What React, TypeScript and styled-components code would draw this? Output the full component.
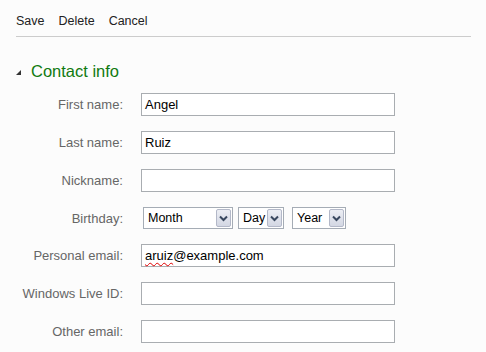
import React from "react";
import styled, { createGlobalStyle } from "styled-components";

const GlobalStyle = createGlobalStyle`
	html, body {
		margin: 0;
		padding: 0;
		background: #fcfcfc;
	}
	body {
		font-family: "Liberation Sans", Arial, sans-serif;
		font-size: 13px;
		color: #222;
	}
`;

const Page = styled.div`
	width: 486px;
	height: 352px;
	overflow: hidden;
	background: #fcfcfc;
`;

const Toolbar = styled.div`
	display: flex;
	gap: 14px;
	margin: 0 15px 0 16px;
	padding: 14px 0 7px;
	border-bottom: 1px solid #cccccc;
	font-size: 12.5px;
	line-height: 15px;
	color: #222;
`;

const ToolLink = styled.span`
	cursor: pointer;
`;

const SectionHead = styled.div`
	display: flex;
	align-items: center;
	gap: 10px;
	margin: 24px 0 0 16px;
`;

const Expander = styled.span`
	width: 0;
	height: 0;
	margin-top: 3px;
	border-style: solid;
	border-width: 0 0 5px 5px;
	border-color: transparent transparent #333 transparent;
`;

const Title = styled.h2`
	margin: 0;
	font-size: 16.5px;
	font-weight: normal;
	line-height: 20px;
	color: #117a11;
`;

const Form = styled.div`
	display: flex;
	flex-direction: column;
	gap: 15px;
	margin-top: 12px;
	padding-left: 16px;
`;

const Row = styled.div`
	display: flex;
	align-items: center;
	gap: 18px;
`;

const Label = styled.label`
	width: 107px;
	text-align: right;
	color: #666;
	font-size: 13px;
	white-space: nowrap;
	flex-shrink: 0;
`;

const TextBox = styled.div`
	box-sizing: border-box;
	width: 254px;
	height: 23px;
	padding: 0 3px;
	border: 1px solid #a9adb1;
	background: #fff;
	color: #000;
	font-size: 13px;
	line-height: 21px;
`;

const Misspelled = styled.span`
	text-decoration: underline wavy #e00000;
	text-decoration-thickness: 1px;
	text-underline-offset: 2px;
`;

const Selects = styled.div`
	display: flex;
	margin-left: 2px;
`;

const Drop = styled.div<{ $w: number; $gap: number }>`
	box-sizing: border-box;
	display: flex;
	align-items: center;
	justify-content: space-between;
	width: ${(p) => p.$w}px;
	height: 22px;
	margin-right: ${(p) => p.$gap}px;
	padding: 1px 1px 1px 4px;
	border: 1px solid #a5acb5;
	background: #fff;
	color: #000;
	font-size: 12.5px;
`;

const DropText = styled.span`
	white-space: nowrap;
`;

const DropButton = styled.span`
	box-sizing: border-box;
	display: flex;
	flex-shrink: 0;
	align-items: center;
	justify-content: center;
	width: 15px;
	height: 18px;
	margin-left: 2px;
	border: 1px solid #b3b8c8;
	border-radius: 2px;
	background: linear-gradient(#eceef4, #d3d7e3);
`;

const Chevron = () => (
	<svg width="9" height="7" viewBox="0 0 9 7">
		<path d="M1 1.5 L4.5 5 L8 1.5" fill="none" stroke="#39485f" strokeWidth="2" />
	</svg>
);

type Field = { label: string; value?: string; spell?: boolean };

const fieldsTop: Field[] = [
	{ label: "First name:", value: "Angel" },
	{ label: "Last name:", value: "Ruiz" },
	{ label: "Nickname:" },
];

const fieldsBottom: Field[] = [
	{ label: "Personal email:", value: "aruiz@example.com", spell: true },
	{ label: "Windows Live ID:" },
	{ label: "Other email:" },
];

const dropdowns = [
	{ text: "Month", w: 90, gap: 5 },
	{ text: "Day", w: 46, gap: 8 },
	{ text: "Year", w: 54, gap: 0 },
];

const renderField = (f: Field) => {
	let content: React.ReactNode = f.value;
	if (f.spell && f.value) {
		const at = f.value.indexOf("@");
		content = (
			<>
				<Misspelled>{f.value.slice(0, at)}</Misspelled>
				{f.value.slice(at)}
			</>
		);
	}
	return (
		<Row key={f.label}>
			<Label>{f.label}</Label>
			<TextBox>{content}</TextBox>
		</Row>
	);
};

export default function App() {
	return (
		<Page>
			<GlobalStyle />
			<Toolbar>
				<ToolLink>Save</ToolLink>
				<ToolLink>Delete</ToolLink>
				<ToolLink>Cancel</ToolLink>
			</Toolbar>

			<SectionHead>
				<Expander />
				<Title>Contact info</Title>
			</SectionHead>

			<Form>
				{fieldsTop.map(renderField)}
				<Row>
					<Label>Birthday:</Label>
					<Selects>
						{dropdowns.map((d) => (
							<Drop key={d.text} $w={d.w} $gap={d.gap}>
								<DropText>{d.text}</DropText>
								<DropButton>
									<Chevron />
								</DropButton>
							</Drop>
						))}
					</Selects>
				</Row>
				{fieldsBottom.map(renderField)}
			</Form>
		</Page>
	);
}
